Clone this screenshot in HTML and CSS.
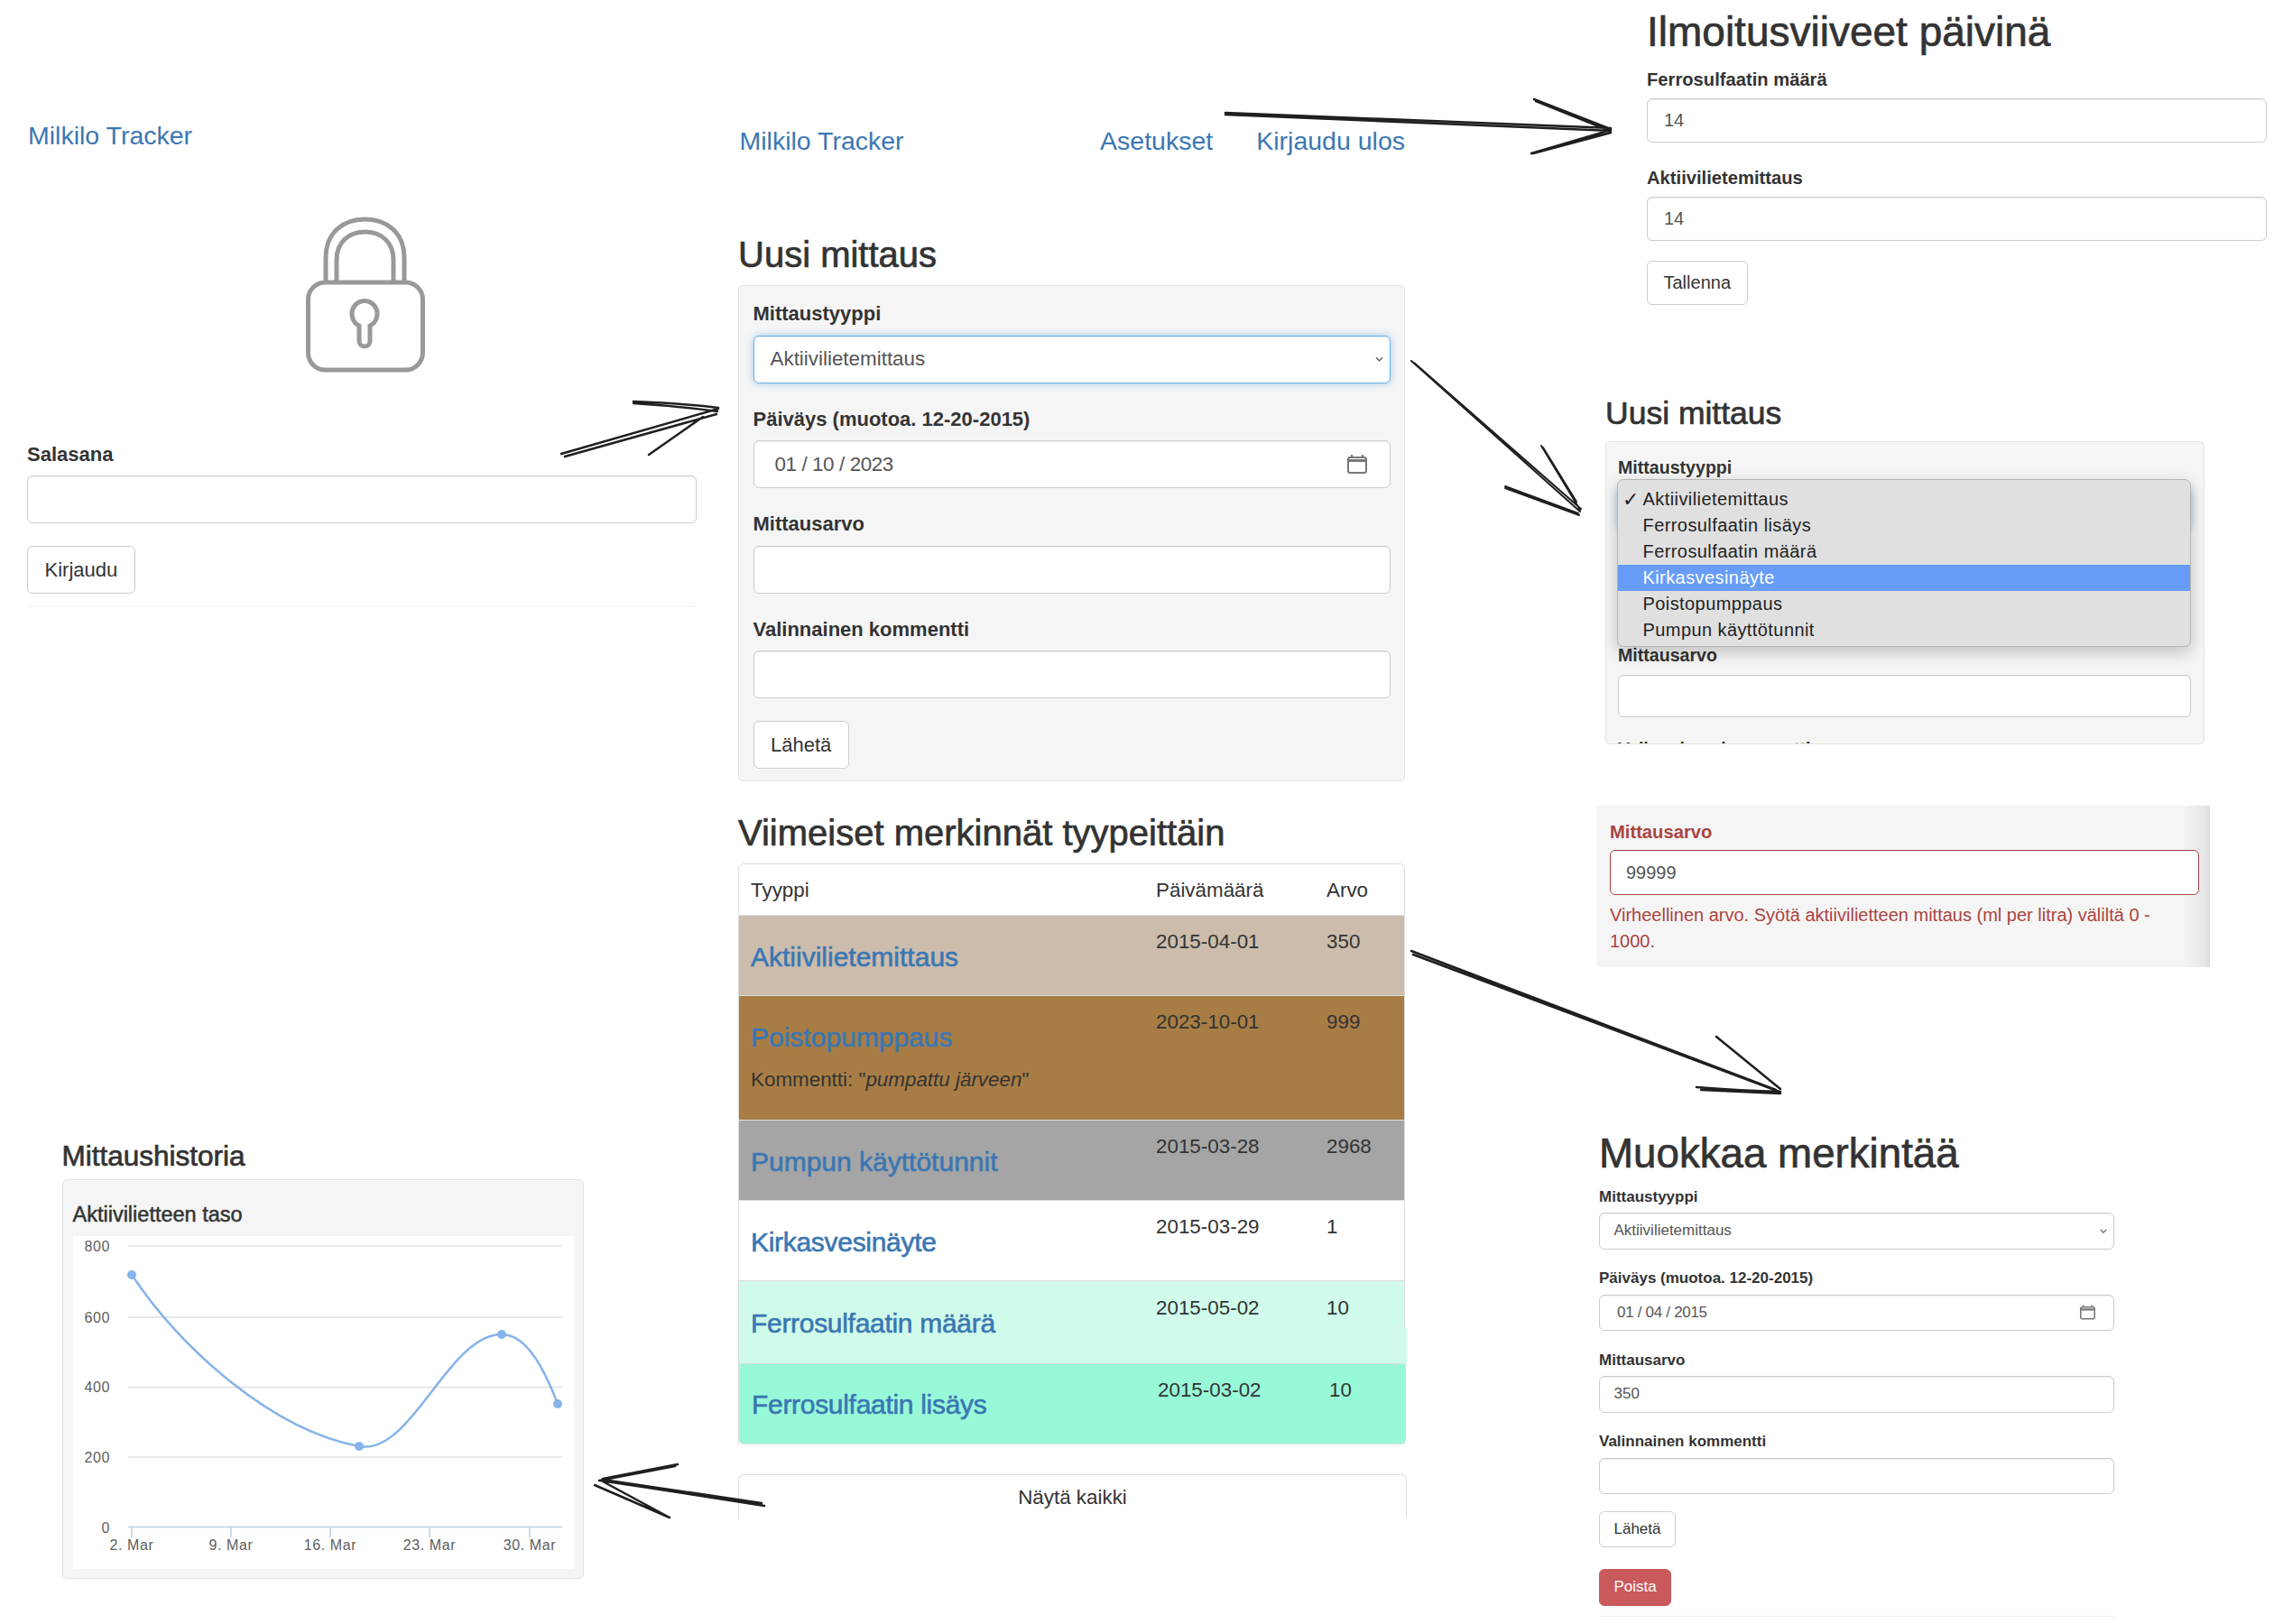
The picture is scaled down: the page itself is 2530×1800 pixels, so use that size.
FILE: index.html
```html
<!DOCTYPE html>
<html lang="fi">
  <head>
    <meta charset="UTF-8" />
    <title>Milkilo Tracker</title>
    <link rel="stylesheet" href="styles.css">
  </head>
  <body>
    <!-- Login -->
    <section class="shot login">
      <a class="nav-link brand" href="#">Milkilo Tracker</a>
      <svg class="lock" viewBox="335 238 140 176" width="140" height="176" fill="none" stroke="#999" stroke-width="5">
        <rect x="341.5" y="313" width="127" height="97" rx="19" />
        <path d="M361 311 V286 C361 258 380 243 404.500 243 C429 243 448 258 448 286 V311" />
        <path d="M373 311 V288 C373 268 387 257 404.500 257 C422 257 436 268 436 288 V311" />
        <path d="M398 361 A14 14.500 0 1 1 410 361 V378 A6 6 0 0 1 398 378 Z" />
      </svg>
      <label class="form-label">Salasana</label>
      <input class="control" type="password">
      <button class="btn">Kirjaudu</button>
      <div class="rule"></div>
    </section>

    <!-- Main page -->
    <section class="shot main">
      <nav class="navbar">
        <a class="nav-link" href="#">Milkilo Tracker</a>
        <div class="nav-right">
          <a class="nav-link" href="#">Asetukset</a>
          <a class="nav-link" href="#">Kirjaudu ulos</a>
        </div>
      </nav>

      <h2 class="title">Uusi mittaus</h2>
      <form class="well">
        <div class="field">
          <label class="form-label">Mittaustyyppi</label>
          <div class="control select focused">
            Aktiivilietemittaus
            <svg class="chevron" viewBox="0 0 10 6" width="9" height="6"><path d="M1 1 L5 5 L9 1" /></svg>
          </div>
        </div>
        <div class="field">
          <label class="form-label">Päiväys (muotoa. 12-20-2015)</label>
          <div class="control date">
            01 / 10 / 2023
            <svg class="calendar" viewBox="0 0 22 21" width="22" height="21"><path d="M5 0 V3 M17 0 V3" /><rect x="1" y="3" width="20" height="17" rx="2" /><path class="bar" d="M1 6.500 H21" /></svg>
          </div>
        </div>
        <div class="field">
          <label class="form-label">Mittausarvo</label>
          <input class="control" type="text">
        </div>
        <div class="field">
          <label class="form-label">Valinnainen kommentti</label>
          <input class="control" type="text">
        </div>
        <button class="btn" type="button">Lähetä</button>
      </form>

      <h2 class="title">Viimeiset merkinnät tyypeittäin</h2>
      <div class="entries">
        <div class="tr thead">
          <div>Tyyppi</div>
          <div>Päivämäärä</div>
          <div>Arvo</div>
        </div>
        <div class="tr row-sludge">
          <div><a class="entry-link" href="#">Aktiivilietemittaus</a></div>
          <div>2015-04-01</div>
          <div>350</div>
        </div>
        <div class="tr row-pump">
          <div>
            <a class="entry-link" href="#">Poistopumppaus</a>
            <p class="comment">Kommentti: "<em>pumpattu järveen</em>"</p>
          </div>
          <div>2023-10-01</div>
          <div>999</div>
        </div>
        <div class="tr row-hours">
          <div><a class="entry-link" href="#">Pumpun käyttötunnit</a></div>
          <div>2015-03-28</div>
          <div>2968</div>
        </div>
        <div class="tr row-clear">
          <div><a class="entry-link" href="#">Kirkasvesinäyte</a></div>
          <div>2015-03-29</div>
          <div>1</div>
        </div>
        <div class="tr row-amount">
          <div><a class="entry-link" href="#">Ferrosulfaatin määrä</a></div>
          <div>2015-05-02</div>
          <div>10</div>
        </div>
        <div class="tr row-added">
          <div><a class="entry-link" href="#">Ferrosulfaatin lisäys</a></div>
          <div>2015-03-02</div>
          <div>10</div>
        </div>
      </div>
      <div class="show-all">Näytä kaikki</div>
    </section>

    <!-- Settings -->
    <section class="shot settings">
      <h1 class="title">Ilmoitusviiveet päivinä</h1>
      <div class="field">
        <label class="form-label">Ferrosulfaatin määrä</label>
        <input class="control" type="text" value="14">
      </div>
      <div class="field">
        <label class="form-label">Aktiivilietemittaus</label>
        <input class="control" type="text" value="14">
      </div>
      <button class="btn">Tallenna</button>
    </section>

    <!-- Open select -->
    <section class="shot dropdown">
      <h2 class="title">Uusi mittaus</h2>
      <div class="well">
        <div class="field">
          <label class="form-label">Mittaustyyppi</label>
          <div class="control focused"></div>
        </div>
        <div class="field">
          <div class="form-label"></div>
          <div class="control"></div>
        </div>
        <div class="field">
          <label class="form-label">Mittausarvo</label>
          <input class="control" type="text">
        </div>
        <label class="form-label">Valinnainen kommentti</label>
        <ul class="menu">
          <li><span class="check">✓</span>Aktiivilietemittaus</li>
          <li>Ferrosulfaatin lisäys</li>
          <li>Ferrosulfaatin määrä</li>
          <li class="active">Kirkasvesinäyte</li>
          <li>Poistopumppaus</li>
          <li>Pumpun käyttötunnit</li>
        </ul>
      </div>
    </section>

    <!-- Validation error -->
    <section class="shot error">
      <label class="form-label">Mittausarvo</label>
      <input class="control" type="text" value="99999">
      <p class="help">Virheellinen arvo. Syötä aktiivilietteen mittaus (ml per litra) väliltä 0 - 1000.</p>
    </section>

    <!-- Edit entry -->
    <section class="shot edit">
      <h1 class="title">Muokkaa merkintää</h1>
      <div class="field">
        <label class="form-label">Mittaustyyppi</label>
        <div class="control select">
          Aktiivilietemittaus
          <svg class="chevron" viewBox="0 0 10 6" width="8" height="5"><path d="M1 1 L5 5 L9 1" /></svg>
        </div>
      </div>
      <div class="field">
        <label class="form-label">Päiväys (muotoa. 12-20-2015)</label>
        <div class="control date">
          01 / 04 / 2015
          <svg class="calendar" viewBox="0 0 22 21" width="17" height="17"><path d="M5 0 V3 M17 0 V3" /><rect x="1" y="3" width="20" height="17" rx="2" /><path class="bar" d="M1 6.500 H21" /></svg>
        </div>
      </div>
      <div class="field">
        <label class="form-label">Mittausarvo</label>
        <input class="control" type="text" value="350">
      </div>
      <div class="field">
        <label class="form-label">Valinnainen kommentti</label>
        <input class="control" type="text">
      </div>
      <button class="btn">Lähetä</button>
      <button class="btn btn-danger">Poista</button>
      <div class="rule"></div>
    </section>

    <!-- History chart -->
    <section class="shot history">
      <h2 class="title">Mittaushistoria</h2>
      <div class="well">
        <h4 class="chart-title">Aktiivilietteen taso</h4>
        <svg class="chart" viewBox="0 0 555 369" width="555" height="369">
          <g class="grid">
            <path d="M61 11 H542" />
            <path d="M61 90 H542" />
            <path d="M61 167.500 H542" />
            <path d="M61 245 H542" />
          </g>
          <path class="axis" d="M61 322.500 H542 M65 322.500 V334 M175 322.500 V334 M285 322.500 V334 M395 322.500 V334 M506 322.500 V334" />
          <g class="y-labels">
            <text x="41" y="17">800</text>
            <text x="41" y="96">600</text>
            <text x="41" y="173">400</text>
            <text x="41" y="251">200</text>
            <text x="41" y="329">0</text>
          </g>
          <g class="x-labels">
            <text x="65" y="348">2. Mar</text>
            <text x="175" y="348">9. Mar</text>
            <text x="285" y="348">16. Mar</text>
            <text x="395" y="348">23. Mar</text>
            <text x="506" y="348">30. Mar</text>
          </g>
          <path class="line" d="M65 43 C120 125 220 215 317 233 C375 244 415 109 475 109 C505 109 525 155 537 186" />
          <g class="points">
            <circle cx="65" cy="43" r="5" />
            <circle cx="317" cy="233" r="5" />
            <circle cx="475" cy="109" r="5" />
            <circle cx="537" cy="186" r="5" />
          </g>
        </svg>
      </div>
    </section>

    <!-- Hand drawn arrows between the screenshots -->
    <svg class="arrows" viewBox="0 0 2530 1800" width="2530" height="1800">
      <!-- login to main -->
      <path d="M622 503 L796 453 M626 506 L794 459 M702 445 Q755 447 796 452 M702 447 Q750 450 795 456 M719 504 L779 462" />
      <!-- main to settings -->
      <path d="M1358 125 L1785 142 M1358 127 L1785 145 M1700 110 L1785 143 M1702 112 L1784 145 M1697 170 L1785 144 M1699 170 L1785 147" />
      <!-- select to open dropdown -->
      <path class="thin" d="M1564 400 L1751 567 M1567 402 L1752 564 M1708 494 L1751 565 M1710 496 L1747 556 M1668 539 L1749 569 M1668 541 L1750 571" />
      <!-- table to edit form -->
      <path d="M1564 1054 L1968 1208 M1566 1058 L1972 1210 M1902 1149 L1973 1207 M1880 1205 Q1930 1209 1973 1210 M1885 1208 Q1930 1210 1973 1212" />
      <!-- table to chart -->
      <path d="M847 1669 Q760 1655 665 1641 M844 1666 Q750 1652 668 1640 M751 1623 L668 1639 M748 1625 L664 1641 M742 1682 L659 1646 M742 1682 L668 1642" />
    </svg>
  </body>
</html>
```

FILE: styles.css
```css
* {
  margin: 0;
  padding: 0;
  box-sizing: border-box;
}

body {
  position: relative;
  width: 2530px;
  height: 1800px;
  overflow: hidden;
  background: #fff;
  color: #333;
  font-family: "Liberation Sans", Arial, sans-serif;
  font-size: 22.4px;
}

a {
  color: #3a77b3;
  text-decoration: none;
}

/* Every pasted screenshot sits at its own spot on the canvas */
.shot {
  position: absolute;
  --label-size: 22px;
  --label-line: 30px;
  --label-gap: 8.5px;
  --control-height: 53px;
  --control-size: 22.4px;
  --control-pad: 18px;
  --field-gap: 25px;
}

.login { left: 30px; top: 130px; width: 742px; }
.main { left: 818px; top: 136px; width: 739px; }
.settings {
  left: 1825px;
  top: 9px;
  width: 686.5px;
  --label-size: 20.2px;
  --label-line: 26px;
  --label-gap: 8px;
  --control-height: 49.5px;
  --control-size: 20px;
  --field-gap: 25.5px;
}
.dropdown {
  left: 1779px;
  top: 437px;
  width: 664px;
  --label-size: 19.6px;
  --label-line: 26px;
  --label-gap: 9px;
  --control-height: 47px;
  --field-gap: 22px;
}
.error {
  left: 1769px;
  top: 893px;
  width: 680px;
  height: 179px;
  padding: 16px 12px 0 15px;
  background: linear-gradient(to right, #f5f5f5 95.5%, #e6e6e6 99%, #dcdcdc);
  --label-size: 20.2px;
  --label-line: 26px;
  --label-gap: 7px;
  --control-height: 50px;
  --control-size: 20px;
  --control-pad: 17px;
}
.edit {
  left: 1772px;
  top: 1253px;
  width: 571px;
  --label-size: 17px;
  --label-line: 22px;
  --label-gap: 6.5px;
  --control-height: 40.5px;
  --control-size: 17px;
  --control-pad: 15.5px;
  --field-gap: 20px;
}
.history { left: 68.5px; top: 1262.5px; width: 578.5px; }

/* Headings */
.title {
  font-weight: 400;
  font-size: 40px;
  line-height: 46px;
  padding-top: 2px;
  margin-bottom: 11px;
  -webkit-text-stroke: 0.7px #333;
}

.settings .title { padding: 0; margin-bottom: 13.5px; font-size: 46px; line-height: 52px; }
.dropdown .title { padding: 0; margin-bottom: 10px; font-size: 35.5px; line-height: 42px; }
.edit .title { padding: 0; margin-bottom: 9px; font-size: 45.7px; line-height: 52px; }
.history .title { padding: 0; margin-bottom: 8.5px; font-size: 31.5px; line-height: 36px; }

/* Navbar */
.nav-link {
  font-size: 28.5px;
  line-height: 40px;
}

.navbar {
  display: flex;
  justify-content: space-between;
  padding-left: 1.5px;
  margin-bottom: 81px;
}

.nav-right {
  display: flex;
  gap: 48px;
}

.brand {
  display: block;
  padding-left: 1px;
  margin-bottom: 68px;
}

/* Login */
.lock {
  display: block;
  margin: 0 0 74.5px 305px;
}

/* Forms */
.well {
  background: #f5f5f5;
  border: 1px solid #e3e3e3;
  border-radius: 5px;
  padding: 16px 15px 13px 15.5px;
  margin-bottom: 32px;
}

.field {
  margin-bottom: var(--field-gap);
}

.form-label {
  display: block;
  min-height: var(--label-line);
  font-weight: bold;
  font-size: var(--label-size);
  line-height: var(--label-line);
  margin-bottom: var(--label-gap);
}

.edit .form-label {
  padding-top: 1.5px;
  min-height: 23.5px;
}

.control {
  display: block;
  width: 100%;
  height: var(--control-height);
  padding: 0 var(--control-pad);
  background: #fff;
  border: 1px solid #ccc;
  border-radius: 6px;
  box-shadow: inset 0 1px 1px rgba(0, 0, 0, 0.075);
  color: #555;
  font-family: inherit;
  font-size: var(--control-size);
}

.select,
.date {
  display: flex;
  align-items: center;
  justify-content: space-between;
}

.date {
  padding-left: 23px;
  padding-right: 25px;
  letter-spacing: -0.4px;
}

.edit .date {
  padding-left: 19px;
  padding-right: 20px;
  letter-spacing: -0.3px;
}

.select {
  padding-right: 7px;
}

.focused {
  border-color: #66afe9;
  box-shadow: inset 0 1px 1px rgba(0, 0, 0, 0.075), 0 0 8px rgba(102, 175, 233, 0.6);
}

.chevron path {
  fill: none;
  stroke: #555;
  stroke-width: 1.4;
}

.calendar {
  fill: none;
  stroke: #777;
  stroke-width: 2;
}

.calendar .bar {
  stroke-width: 3;
}

.btn {
  display: block;
  height: 53px;
  padding: 0 18.5px;
  background: #fff;
  border: 1px solid #ccc;
  border-radius: 6px;
  color: #333;
  font-family: inherit;
  font-size: 22px;
}

.settings .btn {
  height: 49px;
  margin-top: -4px;
  padding: 0 17.5px;
  font-size: 20px;
}

.edit .btn {
  height: 40.5px;
  margin-top: -1.5px;
  padding: 0 15.5px;
  font-size: 17px;
}

.edit .btn-danger {
  margin-top: 24px;
  background: #c9595a;
  border-color: #c9595a;
  color: #fff;
}

.rule {
  height: 1px;
  margin-top: 14px;
  background: #eee;
}

.edit .rule { margin-top: 11px; }
.login .btn { margin-top: 25px; }

/* Entries table */
.entries {
  border: 1px solid #ddd;
  border-bottom: none;
  border-radius: 6px 6px 0 0;
  margin-bottom: 33px;
}

.tr {
  display: grid;
  grid-template-columns: 449px 189px 1fr;
  padding: 14px 0 25px 13px;
  border-bottom: 1px solid #ddd;
  line-height: 30px;
}

.thead {
  padding: 14px 0 12px 13px;
}

.entry-link {
  display: block;
  margin-top: 15px;
  font-size: 30px;
  line-height: 34px;
  -webkit-text-stroke: 0.6px #3a77b3;
}

.comment {
  margin: 15px 0 4px;
}

.row-sludge { background: #cbbcac; }
.row-pump { background: #a87d45; }
.row-hours { background: #a5a5a5; }

.row-clear .entry-link,
.row-amount .entry-link,
.row-added .entry-link {
  letter-spacing: -0.3px;
}

.row-amount {
  position: relative;
  padding: 15px 0 27px 13px;
  background: #d0fbea;
}

/* This row was pasted a little wider than the rest */
.row-amount::after {
  content: "";
  position: absolute;
  top: 51px;
  bottom: -1px;
  right: -3px;
  width: 3px;
  background: #d0fbea;
}

.row-added {
  margin-right: -2px;
  padding-left: 14px;
  padding-bottom: 26px;
  background: #97f9d8;
  border-radius: 0 0 6px 6px;
  grid-template-columns: 450px 190px 1fr;
}

.row-added .entry-link {
  margin-top: 14px;
}

.show-all {
  width: 741px;
  height: 48px;
  padding-top: 10px;
  border: 1px solid #ddd;
  border-bottom: none;
  border-radius: 6px 6px 0 0;
  line-height: 30px;
  text-align: center;
}

/* Open select menu */
.dropdown .well {
  position: relative;
  height: 336px;
  overflow: hidden;
  padding: 15px 14px 0 13px;
  margin: 0;
}

.menu {
  position: absolute;
  left: 12px;
  top: 41px;
  width: 636px;
  height: 186px;
  padding-top: 6.5px;
  list-style: none;
  background: #e0e0e0;
  border: 1px solid #b5b5b5;
  border-radius: 7px;
  box-shadow: 0 6px 18px rgba(0, 0, 0, 0.22);
  font-size: 20px;
  letter-spacing: 0.42px;
  color: #222;
}

.menu li {
  position: relative;
  height: 29px;
  padding-left: 27.5px;
  line-height: 29px;
}

.menu .active {
  background: #679cf8;
  color: #fff;
}

.check {
  position: absolute;
  left: 5px;
  font-family: "DejaVu Sans", sans-serif;
  font-size: 22px;
}

/* Validation */
.error .form-label { color: #a94442; }
.error .control { border-color: #a94442; }

.help {
  margin-top: 7.5px;
  color: #a94442;
  font-size: 20px;
  line-height: 29px;
}

/* Chart */
.history .well {
  height: 443px;
  padding: 22.5px 0 0 11px;
  margin: 0;
}

.chart-title {
  font-weight: 400;
  font-size: 23.5px;
  line-height: 30px;
  margin-bottom: 9px;
  -webkit-text-stroke: 0.5px #333;
}

.chart {
  display: block;
  background: #fff;
}

.grid path {
  stroke: #e0e0e0;
  stroke-width: 1.500;
}

.axis {
  fill: none;
  stroke: #c0d0e0;
  stroke-width: 1.500;
}

.chart text {
  fill: #606060;
  font-size: 16px;
  letter-spacing: 0.6px;
}

.y-labels text { text-anchor: end; }
.x-labels text { text-anchor: middle; }

.line {
  fill: none;
  stroke: #85b3ea;
  stroke-width: 2.500;
}

.points circle { fill: #85b3ea; }

/* Arrows drawn over everything */
.arrows {
  position: absolute;
  left: 0;
  top: 0;
  pointer-events: none;
  fill: none;
  stroke: #1f1f1f;
  stroke-width: 2.500;
  stroke-linecap: round;
}

.arrows .thin {
  stroke-width: 2;
}
```
